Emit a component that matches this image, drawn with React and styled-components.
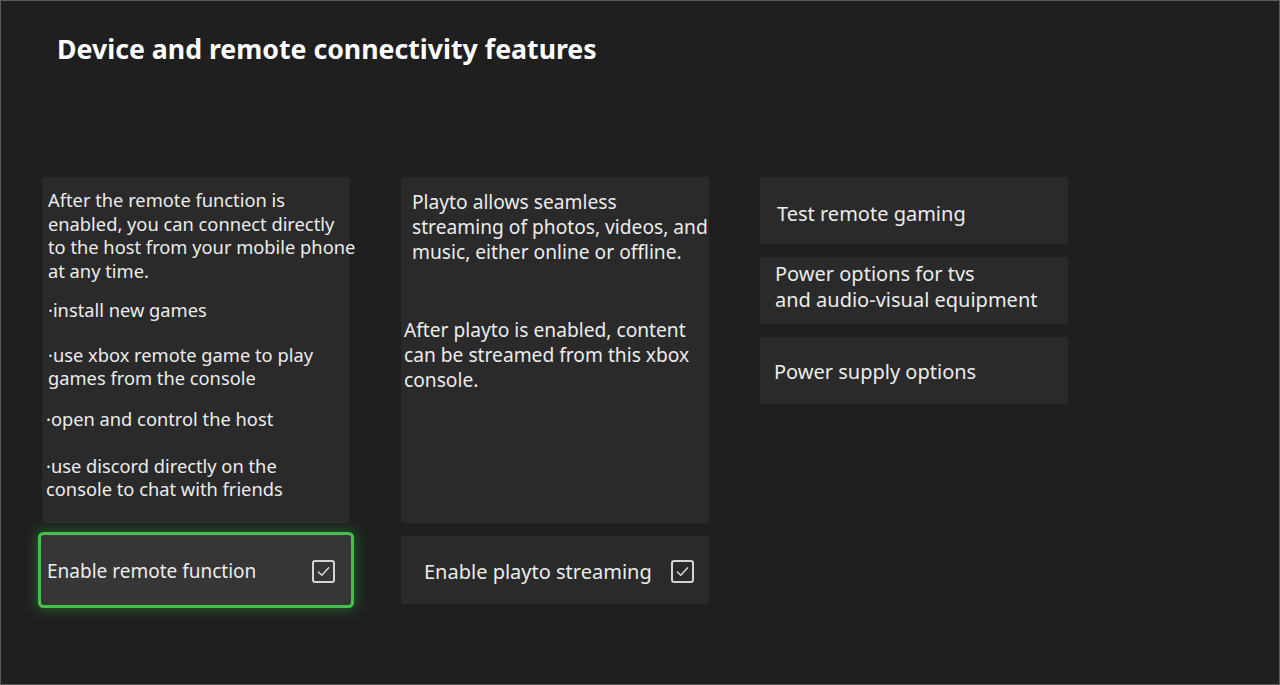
import styled, { createGlobalStyle } from "styled-components";

const GlobalStyle = createGlobalStyle`
  html, body {
    margin: 0;
    padding: 0;
    background: #1f1f1f;
  }
  body {
    font-family: "Noto Sans", "Open Sans", sans-serif;
    color: #ececec;
  }
`;

const Screen = styled.div`
  box-sizing: border-box;
  width: 1280px;
  height: 685px;
  border: 1px solid #5a5a5a;
  background: #1f1f1f;
  padding: 30px 0 0 56px;
  overflow: hidden;
`;

const Title = styled.h1`
  margin: 0;
  font-size: 26.7px;
  font-weight: 700;
  color: #ffffff;
  line-height: 36px;
`;

const Columns = styled.div`
  display: grid;
  grid-template-columns: 308px 308px 308px;
  column-gap: 51px;
  margin: 110px 0 0 -15px;
`;

const Column = styled.div`
  display: flex;
  flex-direction: column;
  gap: 13px;
`;

const InfoCard = styled.div`
  box-sizing: border-box;
  height: 346px;
  background: #2a2a2a;
  border-radius: 2px;
  padding: ${(p) => p.$pad};
  font-size: ${(p) => p.$size || 18.5}px;
  white-space: nowrap;
`;

const Para = styled.p`
  margin: 0 0 ${(p) => p.$after || 0}px ${(p) => p.$indent || 0}px;
  line-height: ${(p) => p.$lh || 23.7}px;
`;

const ToggleCard = styled.div`
  box-sizing: border-box;
  height: 68px;
  display: flex;
  align-items: center;
  justify-content: space-between;
  padding: 2px 15px 0 ${(p) => p.$padLeft}px;
  background: ${(p) => (p.$focused ? "#363636" : "#2a2a2a")};
  border-radius: 2px;
  font-size: ${(p) => p.$size || 19}px;
  white-space: nowrap;
  box-shadow: ${(p) =>
    p.$focused
      ? "0 0 0 1px #3a3a3a, 0 0 0 4px #45c04e, 0 0 12px 6px rgba(40, 150, 50, 0.5)"
      : "none"};
`;

const Check = styled.span`
  box-sizing: border-box;
  width: 23px;
  height: 23px;
  border: 2px solid #d4d4d4;
  border-radius: 3px;
  display: flex;
  align-items: center;
  justify-content: center;
`;

const MenuItem = styled.div`
  box-sizing: border-box;
  height: 67px;
  display: flex;
  align-items: center;
  padding: ${(p) => (p.$dy > 0 ? p.$dy * 2 : 0)}px 0
    ${(p) => (p.$dy < 0 ? -p.$dy * 2 : 0)}px ${(p) => p.$padLeft || 16}px;
  background: #2a2a2a;
  border-radius: 2px;
  font-size: 20px;
  line-height: 26px;
  white-space: nowrap;
`;

function Checkbox() {
  return (
    <Check>
      <svg width="15" height="15" viewBox="0 0 16 16" fill="none">
        <path
          d="M2.5 8.5 L6.2 12 L13.5 4"
          stroke="#d8d8d8"
          strokeWidth="1.6"
          strokeLinecap="round"
          strokeLinejoin="round"
        />
      </svg>
    </Check>
  );
}

export default function App() {
  return (
    <>
      <GlobalStyle />
      <Screen>
        <Title>Device and remote connectivity features</Title>
        <Columns>
          <Column>
            <InfoCard $pad="11px 0 0 6px" $size={18.3}>
              <Para $after={15}>
                After the remote function is
                <br />
                enabled, you can connect directly
                <br />
                to the host from your mobile phone
                <br />
                at any time.
              </Para>
              <Para $after={21}>·install new games</Para>
              <Para $after={17}>
                ·use xbox remote game to play
                <br />
                games from the console
              </Para>
              <Para $after={23} $indent={-2}>
                ·open and control the host
              </Para>
              <Para $indent={-2}>
                ·use discord directly on the
                <br />
                console to chat with friends
              </Para>
            </InfoCard>
            <ToggleCard $focused $padLeft={5}>
              <span>Enable remote function</span>
              <Checkbox />
            </ToggleCard>
          </Column>
          <Column>
            <InfoCard $pad="12px 0 0 3px" $size={19.2}>
              <Para $after={53} $indent={8} $lh={25}>
                Playto allows seamless
                <br />
                streaming of photos, videos, and
                <br />
                music, either online or offline.
              </Para>
              <Para $lh={25}>
                After playto is enabled, content
                <br />
                can be streamed from this xbox
                <br />
                console.
              </Para>
            </InfoCard>
            <ToggleCard $padLeft={23} $size={20}>
              <span>Enable playto streaming</span>
              <Checkbox />
            </ToggleCard>
          </Column>
          <Column>
            <MenuItem $padLeft={17} $dy={3}>
              Test remote gaming
            </MenuItem>
            <MenuItem $padLeft={15} $dy={-4}>
              Power options for tvs
              <br />
              and audio-visual equipment
            </MenuItem>
            <MenuItem $padLeft={14} $dy={1}>
              Power supply options
            </MenuItem>
          </Column>
        </Columns>
      </Screen>
    </>
  );
}
